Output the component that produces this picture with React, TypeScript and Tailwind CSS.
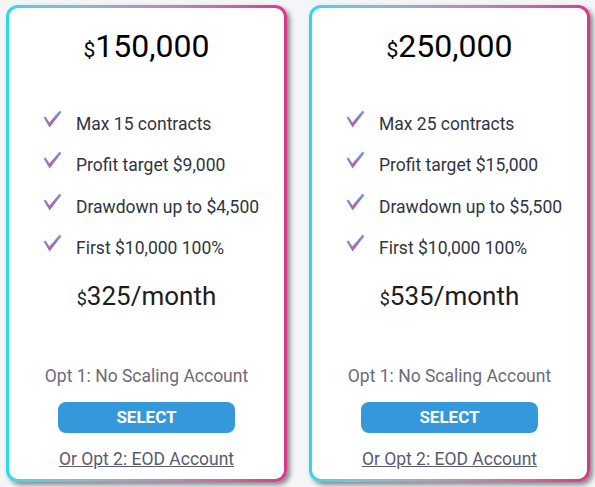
import React from 'react';

const plans = [
  {
    size: '150,000',
    features: ['Max 15 contracts', 'Profit target $9,000', 'Drawdown up to $4,500', 'First $10,000 100%'],
    price: '325',
  },
  {
    size: '250,000',
    features: ['Max 25 contracts', 'Profit target $15,000', 'Drawdown up to $5,500', 'First $10,000 100%'],
    price: '535',
  },
];

function Check({ id }: { id: string }) {
  return (
    <svg width="19" height="18" viewBox="0 0 19 18" className="shrink-0">
      <defs>
        <linearGradient id={id} x1="0" y1="0" x2="0.3" y2="1">
          <stop offset="0" stopColor="#4fc6ec" />
          <stop offset="0.55" stopColor="#8a7fc0" />
          <stop offset="1" stopColor="#c85aa8" />
        </linearGradient>
      </defs>
      <path
        d="M0.6 7.6 L2.6 6.4 L6.4 12.6 L16.6 0.6 L18.4 2.2 L6.6 17.4 Z"
        fill={`url(#${id})`}
      />
    </svg>
  );
}

export default function App() {
  return (
    <div className="min-h-screen bg-[#f4f5f7] flex gap-[22px] pt-[5px] pl-[6px] font-['Roboto',sans-serif]">
      {plans.map((plan, i) => (
        <div
          key={plan.size}
          className="w-[281px] h-[477px] rounded-[12px] p-[3px] bg-gradient-to-r from-[#22d9eb] to-[#d6378a] shadow-[3px_3px_5px_rgba(0,0,0,0.45)]"
        >
          <div className="h-full rounded-[9px] bg-white flex flex-col">
            <div className="mt-[18px] text-center leading-[40px] text-black">
              <span className="text-[21px]">$</span>
              <span className="text-[32px]">{plan.size}</span>
            </div>

            <ul className="mt-[31px] pl-[34px]">
              {plan.features.map((f, j) => (
                <li key={f} className="h-[41.5px] flex items-center gap-[14px] text-[17.5px] text-[#2f3540]">
                  <span className="-mt-[10px]">
                    <Check id={`chk-${i}-${j}`} />
                  </span>
                  {f}
                </li>
              ))}
            </ul>

            <div className="mt-[11px] text-center leading-[32px] text-[#1d1d1d]">
              <span className="text-[18px]">$</span>
              <span className="text-[26px]">{plan.price}/month</span>
            </div>

            <p className="mt-[48px] text-center leading-[24px] text-[17.5px] text-[#6b6b78]">
              Opt 1: No Scaling Account
            </p>

            <button className="mt-[14px] mx-auto w-[177px] h-[31px] rounded-[8px] bg-[#3498db] text-white font-bold text-[17px]">
              SELECT
            </button>

            <a className="mt-[14px] text-center leading-[24px] text-[17.5px] text-[#5a5a70] underline cursor-pointer">
              Or Opt 2: EOD Account
            </a>
          </div>
        </div>
      ))}
    </div>
  );
}
